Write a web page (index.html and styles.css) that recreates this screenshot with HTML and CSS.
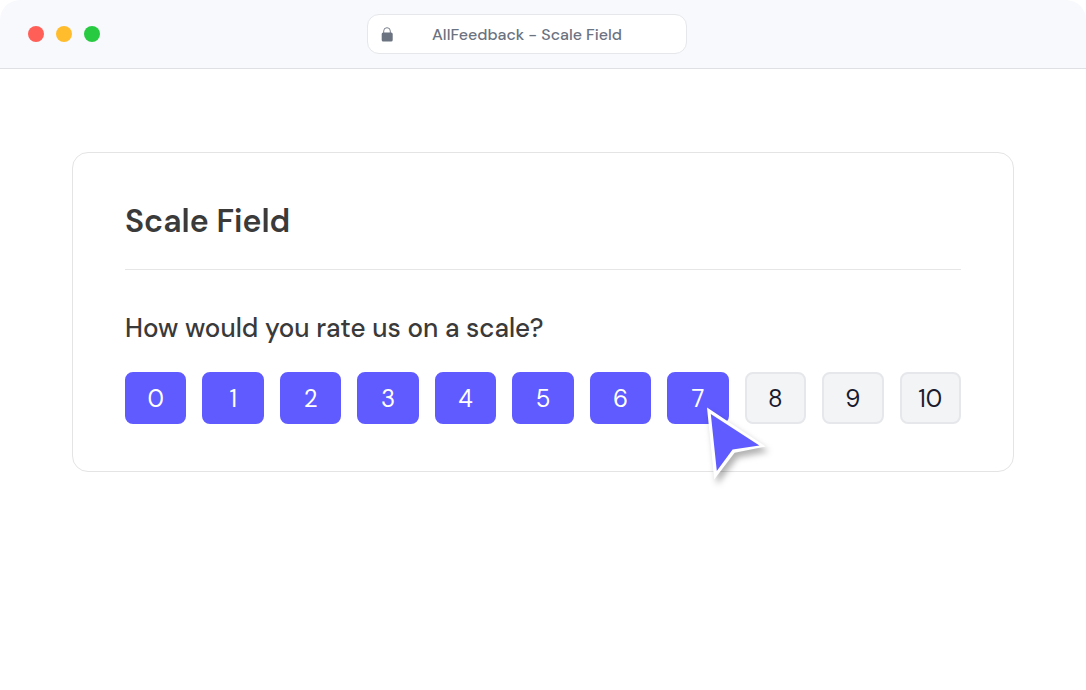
FILE: index.html
```html
<!DOCTYPE html>
<html lang="en">
<head>
    <meta charset="UTF-8">
    <meta name="viewport" content="width=device-width, initial-scale=1.0">
    <title>AllFeedback - Scale Field</title>
    <link rel="stylesheet" href="styles.css">
</head>
<body>
    <header class="titlebar">
        <div class="lights">
            <span class="light red"></span>
            <span class="light yellow"></span>
            <span class="light green"></span>
        </div>
        <div class="address">
            <svg class="lock" viewBox="0 0 12 15" aria-hidden="true">
                <path d="M2.7 7V4a3.3 3.3 0 0 1 6.6 0V7" fill="none" stroke="currentColor" stroke-width="0.9"/>
                <rect x="0.7" y="5.6" width="11" height="8.8" rx="1.5" fill="currentColor"/>
            </svg>
            <span class="address-text">AllFeedback - Scale Field</span>
        </div>
    </header>
    <main>
        <section class="card">
            <h1>Scale Field</h1>
            <h2 id="question">How would you rate us on a scale?</h2>
            <ul class="scale" aria-labelledby="question">
                <li><button type="button" class="active">0</button></li>
                <li><button type="button" class="active">1</button></li>
                <li><button type="button" class="active">2</button></li>
                <li><button type="button" class="active">3</button></li>
                <li><button type="button" class="active">4</button></li>
                <li><button type="button" class="active">5</button></li>
                <li><button type="button" class="active">6</button></li>
                <li>
                    <button type="button" class="active">7</button>
                    <svg class="pointer" viewBox="0 0 64 76" aria-hidden="true">
                        <path d="M0 -0.6L58.8 38.6L27.6 44.7L7.2 71.5Z" fill="#fff"/>
                        <path d="M3.8 6L52.4 37.6L25.6 41.6L9.8 63Z" fill="#605bff"/>
                    </svg>
                </li>
                <li><button type="button">8</button></li>
                <li><button type="button">9</button></li>
                <li><button type="button">10</button></li>
            </ul>
        </section>
    </main>
</body>
</html>
```

FILE: styles.css
```css
* {
    box-sizing: border-box;
}
body {
    font-family: "DM Sans", Lato, sans-serif;
    margin: 0;
    background-color: #fff;
    color: #3a3a3a;
}
.titlebar {
    display: grid;
    grid-template-columns: 1fr 320px 1fr;
    align-items: center;
    padding: 14px 60px 14px 28px;
    background-color: #f8f9fd;
    border-bottom: 1px solid #dfe0e4;
    border-radius: 20px 20px 0 0;
}
.lights {
    display: flex;
    gap: 12px;
}
.light {
    width: 16px;
    height: 16px;
    border-radius: 50%;
}
.red {
    background-color: #ff5f57;
}
.yellow {
    background-color: #ffbd2e;
}
.green {
    background-color: #28ca42;
}
.address {
    display: flex;
    align-items: center;
    height: 40px;
    padding: 0 13px;
    background-color: #fff;
    border: 1px solid #e5e7eb;
    border-radius: 12px;
    color: #6b7280;
}
.lock {
    width: 12px;
    height: 15px;
}
.address-text {
    flex: 1;
    padding-right: 12px;
    font-size: 16px;
    font-weight: 500;
    text-align: center;
}
main {
    padding: 83px 72px;
}
.card {
    padding: 44px 52px 47px;
    border: 1px solid #e4e4e4;
    border-radius: 16px;
}
h1 {
    margin: 0;
    padding-bottom: 24px;
    border-bottom: 1px solid #e6e6e6;
    font-size: 32px;
    line-height: 48px;
    font-weight: 600;
}
h2 {
    margin: 40px 0 26px;
    font-size: 26px;
    line-height: 36px;
    font-weight: 500;
}
.scale {
    display: flex;
    gap: 16px;
    margin: 0;
    padding: 0;
    list-style: none;
}
.scale li {
    position: relative;
    flex: 1;
}
.scale button {
    display: block;
    width: 100%;
    height: 52px;
    padding: 0;
    border: 2px solid #e5e7eb;
    border-radius: 8px;
    background-color: #f3f4f6;
    color: #1a1a2e;
    font-family: inherit;
    font-size: 24px;
    cursor: pointer;
}
.scale .active {
    border-color: #605bff;
    background-color: #605bff;
    color: #fff;
}
.pointer {
    position: absolute;
    top: 36px;
    left: 40px;
    z-index: 1;
    width: 64px;
    height: 76px;
    overflow: visible;
    filter: drop-shadow(3px 5px 3px rgba(0, 0, 0, 0.3));
    pointer-events: none;
}
```
